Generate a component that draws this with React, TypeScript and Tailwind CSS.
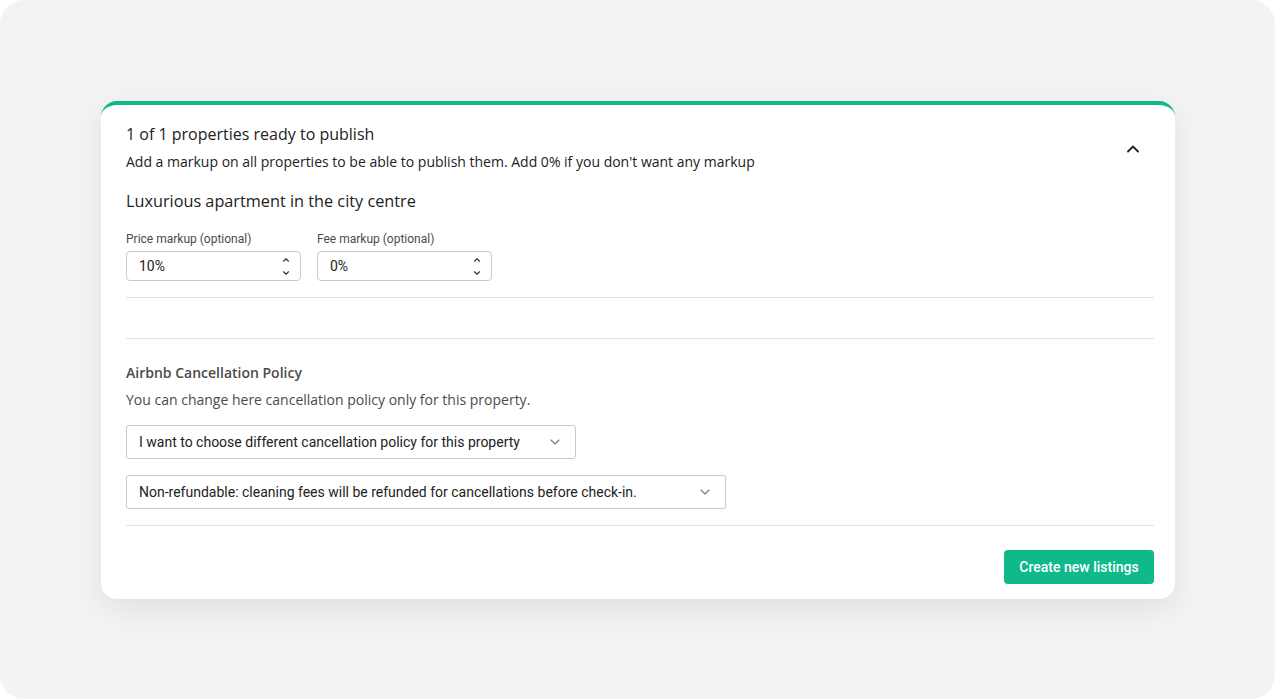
import { ChevronDown, ChevronUp } from 'lucide-react';

function NumberInput({ label, value }: { label: string; value: string }) {
	return (
		<div className="flex flex-col gap-[5px]">
			<label className="text-[12px] leading-[14px] text-[#4b4b4b] font-['Roboto',sans-serif]">{label}</label>
			<div className="flex items-center justify-between w-[175px] h-[30px] pl-[12px] pr-[9px] border border-[#c9c9c9] rounded-[4px] bg-white">
				<span className="text-[14px] text-[#222] font-['Roboto',sans-serif]">{value}</span>
				<div className="flex flex-col items-center text-[#333] gap-[3px]">
					<ChevronUp className="size-[10px]" strokeWidth={2.6} />
					<ChevronDown className="size-[10px]" strokeWidth={2.6} />
				</div>
			</div>
		</div>
	);
}

function Select({ value, width }: { value: string; width: string }) {
	return (
		<div className={`flex items-center justify-between h-[34px] pl-[12px] pr-[12px] border border-[#c9c9c9] rounded-[3px] bg-white ${width}`}>
			<span className="text-[14px] text-[#222] font-['Roboto',sans-serif]">{value}</span>
			<ChevronDown className="size-[16px] text-[#777]" strokeWidth={1.6} />
		</div>
	);
}

export default function App() {
	return (
		<div className="w-[1275px] h-[699px] bg-white">
			<div className="w-full h-full rounded-[24px] bg-[#f3f3f4] pt-[101px] px-[101px] font-['Open_Sans',sans-serif]">
				<div className="w-[1074px] h-[498px] bg-white rounded-[16px] border-t-[4px] border-[#10b98a] shadow-[0_10px_30px_rgba(0,0,0,0.08)] pl-[25px] pr-[21px] pt-[18px]">
					<div className="flex justify-between">
						<div className="flex flex-col">
							<h1 className="text-[16px] leading-[22px] text-[#222]">1 of 1 properties ready to publish</h1>
							<p className="text-[14px] leading-[20px] mt-[7px] text-[#222]">
								Add a markup on all properties to be able to publish them. Add 0% if you don't want any markup
							</p>
						</div>
						<ChevronUp className="size-[20px] text-[#222] mt-[16px] mr-[11px]" strokeWidth={2.2} />
					</div>
					<h2 className="text-[16.25px] leading-[22px] font-medium text-[#222] mt-[18px]">Luxurious apartment in the city centre</h2>
					<div className="flex gap-[16px] mt-[20px]">
						<NumberInput label="Price markup (optional)" value="10%" />
						<NumberInput label="Fee markup (optional)" value="0%" />
					</div>
					<div className="border-t border-[#e3e3e3] mt-[16px]" />
					<div className="border-t border-[#e3e3e3] mt-[40px]" />
					<h3 className="text-[14px] leading-[20px] font-semibold text-[#4b4b4b] mt-[24px]">Airbnb Cancellation Policy</h3>
					<p className="text-[14px] leading-[20px] text-[#4b4b4b] mt-[7px]">You can change here cancellation policy only for this property.</p>
					<div className="flex flex-col gap-[16px] mt-[15px]">
						<Select value="I want to choose different cancellation policy for this property" width="w-[450px]" />
						<Select value="Non-refundable: cleaning fees will be refunded for cancellations before check-in." width="w-[600px]" />
					</div>
					<div className="border-t border-[#e3e3e3] mt-[16px]" />
					<div className="flex justify-end mt-[24px]">
						<button className="h-[34px] w-[150px] rounded-[4px] bg-[#10b98a] text-white text-[14px] font-medium font-['Roboto',sans-serif]">
							Create new listings
						</button>
					</div>
				</div>
			</div>
		</div>
	);
}
